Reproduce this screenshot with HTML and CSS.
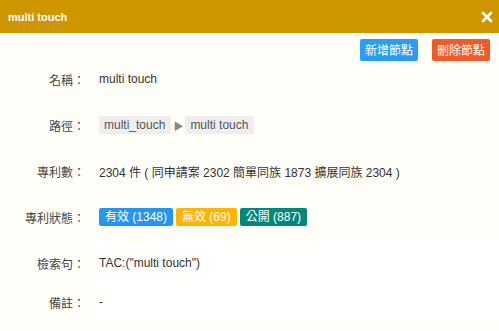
FILE: index.html
```html
<!DOCTYPE html>
<html>
<head>
<meta charset="utf-8">
<title>multi touch</title>
<link rel="stylesheet" href="styles.css">
</head>
<body>
<div class="dialog">
    <header class="dialog-head">
        <span class="dialog-title">multi touch</span>
        <svg class="close" width="12" height="12" viewBox="0 0 12 12">
            <path d="M2 2 L10 10 M10 2 L2 10" stroke="#fff" stroke-width="2.6" stroke-linecap="round"/>
        </svg>
    </header>
    <div class="toolbar">
        <button class="btn btn-add">新增節點</button>
        <button class="btn btn-del">刪除節點</button>
    </div>
    <div class="info">
        <div class="label">名稱：</div>
        <div class="value">multi touch</div>

        <div class="label">路徑：</div>
        <div class="value path">
            <span class="chip">multi_touch</span>
            <span class="arrow">&#9654;</span>
            <span class="chip">multi touch</span>
        </div>

        <div class="label">專利數：</div>
        <div class="value">2304 件 ( 同申請案 2302 簡單同族 1873 擴展同族 2304 )</div>

        <div class="label">專利狀態：</div>
        <div class="value">
            <span class="badge badge-valid">有效 (1348)</span>
            <span class="badge badge-invalid">無效 (69)</span>
            <span class="badge badge-public">公開 (887)</span>
        </div>

        <div class="label">檢索句：</div>
        <div class="value plain">TAC:("multi touch")</div>

        <div class="label">備註：</div>
        <div class="value plain">-</div>
    </div>
</div>
</body>
</html>
```
FILE: styles.css
```css
body {
    margin: 0;
    background: #fffef8;
    font-family: 'Liberation Sans', Arial, 'Noto Sans CJK TC', sans-serif;
    font-size: 12px;
    color: #333;
}
.dialog {
    width: 499px;
    height: 331px;
    overflow: hidden;
}
.dialog-head {
    height: 33px;
    background: #d09600;
    display: flex;
    align-items: center;
    justify-content: space-between;
    padding: 0 6px 0 8px;
    box-sizing: border-box;
}
.dialog-title {
    color: #fff;
    font-weight: bold;
    font-size: 11px;
}
.close {
    display: block;
}
.toolbar {
    display: flex;
    justify-content: flex-end;
    gap: 14px;
    padding: 6px 9px 0 0;
    height: 22px;
}
.btn {
    border: 0;
    border-radius: 2px;
    width: 58px;
    height: 22px;
    padding: 0;
    color: #fff;
    font-family: 'Noto Sans CJK TC', sans-serif;
    font-size: 12px;
    line-height: 22px;
}
.btn-add {
    background: #2a9ef2;
}
.btn-del {
    background: #f25a2a;
}
.info {
    display: grid;
    grid-template-columns: 85px 1fr;
    grid-template-rows: 46px 46px 46px 46px 46px 32px;
    column-gap: 14px;
    margin-top: -5px;
}
.label {
    display: flex;
    align-items: center;
    justify-content: flex-end;
    color: #444;
    font-family: 'Noto Sans CJK TC', sans-serif;
}
.value {
    display: flex;
    align-items: center;
    gap: 3px;
    white-space: nowrap;
}
.value.path {
    gap: 2px;
}
.value.plain {
    background: #fffffd;
    margin-left: -4px;
    padding-left: 4px;
}
.chip {
    background: #eeeeee;
    color: #555;
    height: 18px;
    line-height: 18px;
    padding: 0 6px 0 5px;
}
.arrow {
    color: #888;
    font-size: 10px;
}
.badge {
    color: #fff;
    height: 18px;
    line-height: 18px;
    padding: 0 6px;
    border-radius: 2px;
    font-size: 12px;
}
.badge-valid {
    background: #2196f3;
}
.badge-invalid {
    background: #ffb400;
}
.badge-public {
    background: #00897b;
}
```
